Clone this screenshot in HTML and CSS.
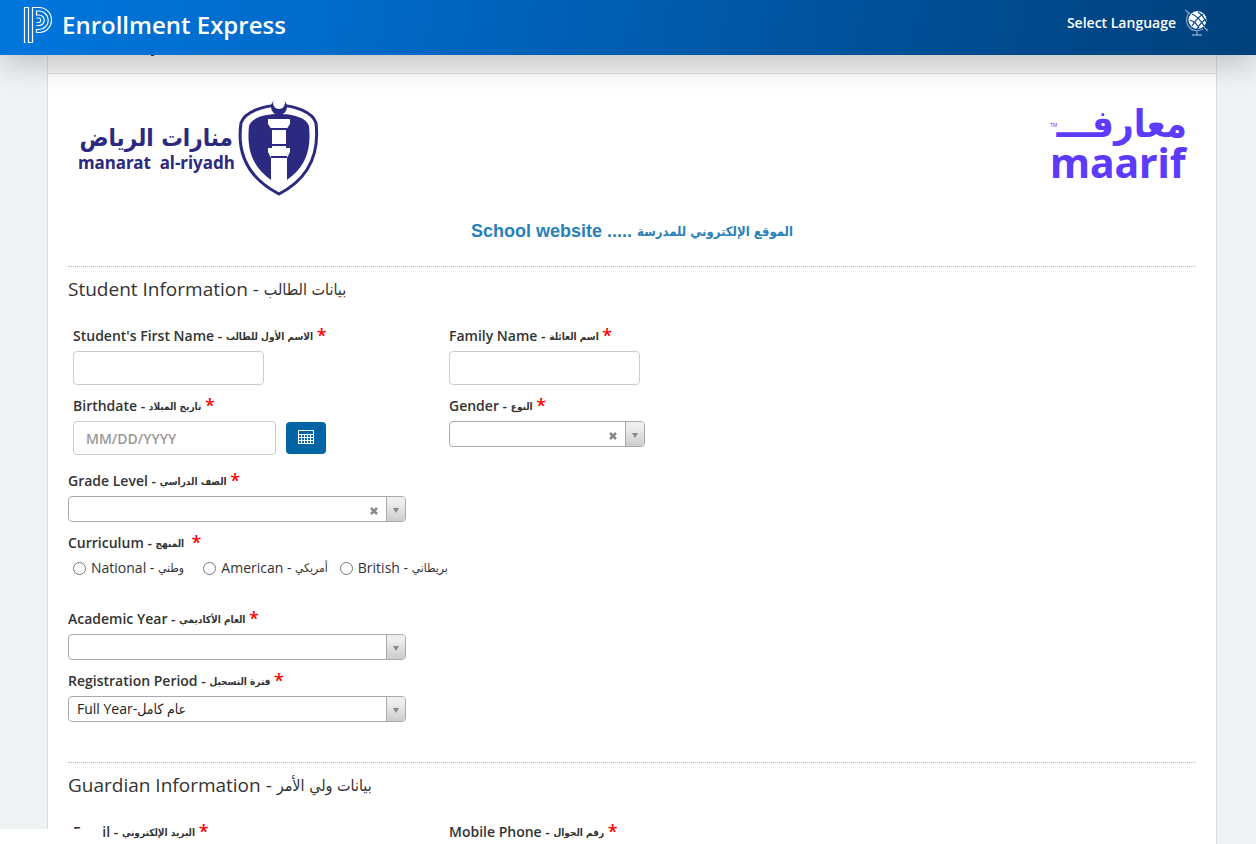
FILE: index.html
```html
<!DOCTYPE html>
<html lang="en">
<head>
    <meta charset="UTF-8">
    <title>Enrollment Express</title>
    <link rel="stylesheet" href="styles.css">
</head>
<body>
    <header class="navbar">
        <svg class="brand-icon" width="30" height="38" viewBox="0 0 30 38" fill="none" stroke="#fff" stroke-width="1.2">
            <path d="M2.500 36.500H1.500V1.500H5.500V29"/>
            <path d="M9.500 36.500H5.500V29M9.500 36.500V1.500H16a12.200 12.200 0 0 1 0 25H13.500V23.500H16a9.200 9.200 0 0 0 0-18.500H13.500V9H16a5.200 5.200 0 0 1 0 10.500H13.500"/>
            <path d="M13.500 12H16a2.300 2.300 0 0 1 0 4.500H13.500"/>
        </svg>
        <span class="brand">Enrollment Express</span>
        <a class="language" href="#">Select Language
            <svg width="24" height="28" viewBox="0 0 24 28" fill="none">
                <circle cx="12.500" cy="11" r="9" fill="#fff"/>
                <path d="M7 5Q14 8 19 17M13 3Q18 6 21 13M5 11Q11 13 14 19M18 5Q11 10 7 17M21 10Q16 13 12 20" stroke="#00498b" stroke-width="1.200"/>
                <path d="M0 1L5 5M4 3Q-1 12 4 18T18 20M19 18L23 22M12 22V26M7 26H17" stroke="#7fa3c5" stroke-width="1.300"/>
            </svg>
        </a>
    </header>

    <main class="panel">
        <div class="panel-heading"></div>
        <form class="panel-body">
            <div class="logos">
                <svg width="252" height="100" viewBox="0 0 252 100">
                    <text class="logo-ar" x="165" y="48" text-anchor="end" direction="ltr" fill="#2b2a80">منارات الرياض</text>
                    <text class="logo-en" x="10" y="71" fill="#2b2a80">manarat&#160; al-riyadh</text>
                    <path d="M211 7C196 8 177 13 173 25C168 60 184 82 211 96C238 82 252 60 248 25C244 13 226 8 211 7Z" fill="#fff" stroke="#2b2a80" stroke-width="3"/>
                    <path d="M211 16C198 16 184 19 181 28C178 57 188 71 203 82V60L200 54V50H204V32L200 26V21H222V26L218 32V50H222V54L219 60V82C234 71 244 57 241 28C238 19 224 16 211 16Z" fill="#2b2a80"/>
                    <path d="M203 31H219M204 47H218M203 59H219" stroke="#2b2a80" stroke-width="2"/>
                    <circle cx="211" cy="9" r="8" fill="#2b2a80"/>
                    <circle cx="211" cy="5" r="6" fill="#fff"/>
                </svg>
                <svg width="140" height="90" viewBox="0 0 140 90">
                    <text class="maarif-ar" x="138" y="39" text-anchor="end" direction="ltr" fill="#5d3bfc">معارفـــ</text>
                    <text class="maarif-en" x="1" y="80" fill="#5d3bfc">maarif</text>
                    <text class="maarif-tm" x="1" y="29" fill="#5d3bfc">TM</text>
                </svg>
            </div>

            <p class="website"><a href="#">School website ..... <span class="ar" lang="ar">الموقع الإلكتروني للمدرسة</span></a></p>

            <section class="section">
                <h2>Student Information - <span class="ar" lang="ar">بيانات الطالب</span></h2>
                <div class="row">
                    <div class="field">
                        <label for="firstName">Student's First Name - <span class="ar" lang="ar">الاسم الأول للطالب</span> <span class="req">*</span></label>
                        <input class="text" type="text" id="firstName">
                    </div>
                    <div class="field">
                        <label for="familyName">Family Name - <span class="ar" lang="ar">اسم العائلة</span> <span class="req">*</span></label>
                        <input class="text" type="text" id="familyName">
                    </div>
                    <div class="field">
                        <label for="birthdate">Birthdate - <span class="ar" lang="ar">تاريخ الميلاد</span> <span class="req">*</span></label>
                        <div class="date">
                            <input class="text date-text" type="text" id="birthdate" placeholder="MM/DD/YYYY">
                            <button class="calendar" type="button" aria-label="Open calendar">
                                <svg width="16" height="14" viewBox="0 0 16 14" fill="none" stroke="#fff" shape-rendering="crispEdges">
                                    <path d="M0 .5H16M0 4.500H16M0 7.500H16M0 10.500H16M0 13.500H16M.5 0V14M3.500 4V14M6.500 4V14M9.500 4V14M12.500 4V14M15.500 0V14"/>
                                </svg>
                            </button>
                        </div>
                    </div>
                    <div class="field">
                        <label for="gender">Gender - <span class="ar" lang="ar">النوع</span> <span class="req">*</span></label>
                        <div class="select short">
                            <select id="gender"><option></option></select>
                            <button class="clear" type="button" aria-label="Clear gender"><svg width="8" height="8" viewBox="0 0 8 8"><path d="M1 1L7 7M7 1L1 7" stroke="#888" stroke-width="2.500"/></svg></button>
                        </div>
                    </div>
                </div>

                <div class="group">
                    <label for="grade">Grade Level - <span class="ar" lang="ar">الصف الدراسي</span> <span class="req">*</span></label>
                    <div class="select">
                        <select id="grade"><option></option></select>
                        <button class="clear" type="button" aria-label="Clear grade"><svg width="8" height="8" viewBox="0 0 8 8"><path d="M1 1L7 7M7 1L1 7" stroke="#888" stroke-width="2.500"/></svg></button>
                    </div>
                </div>

                <fieldset class="group curriculum">
                    <legend>Curriculum - <span class="ar" lang="ar">المنهج</span>&nbsp; <span class="req">*</span></legend>
                    <div class="radios">
                        <label><input type="radio" name="curriculum"><span>National - <span class="ar" lang="ar">وطني</span>&nbsp;&nbsp;</span></label>
                        <label><input type="radio" name="curriculum"><span>American - <span class="ar" lang="ar">أمريكي</span></span></label>
                        <label><input type="radio" name="curriculum"><span>British - <span class="ar" lang="ar">بريطاني</span></span></label>
                    </div>
                </fieldset>

                <div class="group">
                    <label for="year">Academic Year - <span class="ar" lang="ar">العام الأكاديمي</span> <span class="req">*</span></label>
                    <div class="select">
                        <select id="year"><option></option></select>
                    </div>
                </div>

                <div class="group">
                    <label for="period">Registration Period - <span class="ar" lang="ar">فترة التسجيل</span> <span class="req">*</span></label>
                    <div class="select">
                        <select id="period"><option>Full Year-عام كامل</option></select>
                    </div>
                </div>
            </section>

            <section class="section">
                <h2>Guardian Information - <span class="ar" lang="ar">بيانات ولي الأمر</span></h2>
                <div class="row">
                    <div class="field">
                        <label for="email">Email - <span class="ar" lang="ar">البريد الإلكتروني</span> <span class="req">*</span></label>
                        <input class="text" type="email" id="email">
                    </div>
                    <div class="field">
                        <label for="mobile">Mobile Phone - <span class="ar" lang="ar">رقم الجوال</span> <span class="req">*</span></label>
                        <input class="text" type="tel" id="mobile">
                    </div>
                </div>
            </section>
        </form>
    </main>
    <div class="status-bar"></div>
</body>
</html>
```
FILE: styles.css
```css
* {
    box-sizing: border-box;
}

html, body {
    height: 100%;
    overflow: hidden;
}

body {
    margin: 0;
    background: #eff3f4;
    color: #333;
    font: 14px/20px "Open Sans", "DejaVu Sans", sans-serif;
}

.navbar {
    position: relative;
    z-index: 2;
    display: flex;
    align-items: center;
    height: 55px;
    padding: 0 47px 6px 23px;
    background: linear-gradient(100deg, #0076dc, #006ac8 28%, #004a8e 80%, #00417c);
    box-shadow: 0 10px 30px rgba(0, 0, 0, 0.2);
    color: #fff;
}

.brand-icon {
    margin-right: 9px;
}

.brand {
    font-size: 24px;
    font-weight: 600;
    line-height: 32px;
}

.language {
    display: flex;
    align-items: center;
    gap: 9px;
    margin-left: auto;
    padding-bottom: 4px;
    color: #fff;
    font-weight: 600;
    text-decoration: none;
}

.panel {
    margin: 0 39px 0 47px;
    border: 1px solid #d9dcde;
    border-top: 0;
    background: #fff;
}

.panel-heading {
    height: 19px;
    border-bottom: 1px solid #ddd;
    background: #f5f5f5;
}

.panel-heading::before {
    content: "";
    display: block;
    width: 3px;
    height: 1px;
    margin-left: 103px;
    background: #333;
}

.panel-body {
    padding: 24px 20px 0;
}

.logos {
    display: flex;
    justify-content: space-between;
    padding-right: 7px;
}

.logo-ar {
    font: bold 24px "DejaVu Sans Condensed", "DejaVu Sans", sans-serif;
}

.logo-en {
    font: bold 17px "Noto Sans", sans-serif;
}

.maarif-ar {
    font: bold 38px "DejaVu Sans Condensed", "DejaVu Sans", sans-serif;
}

.maarif-en {
    font: bold 41px "Noto Sans", sans-serif;
}

.maarif-tm {
    font: 5px "Noto Sans", sans-serif;
}

.website {
    margin: 23px 0 25px;
    font: bold 18px/20px "Liberation Sans", "DejaVu Sans", sans-serif;
    text-align: center;
}

.ar {
    font-family: "DejaVu Sans Condensed", "DejaVu Sans", sans-serif;
    font-size: 10px;
    line-height: 1;
    vertical-align: 1px;
}

.website a {
    color: #2980b9;
    text-decoration: none;
}

.website .ar {
    font-size: 13px;
}

.section {
    border-top: 1px dotted #bbb;
    padding-bottom: 40px;
}

h2 {
    margin: 10px 0 25px;
    font-size: 19px;
    font-weight: 400;
    line-height: 24px;
}

h2 .ar {
    font-size: 16px;
}

.row {
    display: grid;
    grid-template-columns: repeat(3, 1fr);
    row-gap: 11px;
}

.field {
    padding-left: 5px;
}

.field:nth-child(even) {
    grid-column: 2 / 4;
}

label, legend {
    display: block;
    height: 20px;
    margin-bottom: 5px;
    padding: 0;
    font-weight: 600;
    white-space: nowrap;
}

.req {
    color: #f00;
    font-size: 18px;
    font-weight: 600;
    line-height: 1;
    vertical-align: -1px;
}

.text {
    display: block;
    width: 191px;
    height: 34px;
    padding: 6px 12px;
    border: 1px solid #ccc;
    border-radius: 4px;
    background: #fff;
    font: 600 14px/20px "Open Sans", sans-serif;
}

.text::placeholder {
    color: #999;
}

.date {
    display: flex;
    align-items: center;
    gap: 10px;
}

.date-text {
    width: 203px;
}

.calendar {
    display: flex;
    align-items: center;
    justify-content: center;
    width: 40px;
    height: 32px;
    padding: 0 0 2px;
    border: 0;
    border-radius: 4px;
    background: #0064a5;
}

.group {
    margin: 11px 0 0;
    padding: 0;
    border: 0;
}

.row + .group {
    margin-top: 16px;
}

.select {
    position: relative;
    width: 338px;
}

.select.short {
    width: 196px;
}

.select select {
    display: block;
    appearance: none;
    width: 100%;
    height: 26px;
    padding: 0 28px 0 8px;
    border: 1px solid #aaa;
    border-radius: 4px;
    background: #fff;
    color: #222;
    font: 14px/24px "Open Sans", "DejaVu Sans Condensed", "DejaVu Sans", sans-serif;
}

/* arrow cell */
.select::before {
    content: "";
    position: absolute;
    top: 1px;
    right: 1px;
    bottom: 1px;
    width: 18px;
    border-left: 1px solid #aaa;
    border-radius: 0 3px 3px 0;
    background: linear-gradient(#eee 20%, #ccc);
    pointer-events: none;
}

.select::after {
    content: "";
    position: absolute;
    top: 12px;
    right: 7px;
    border: 3px solid transparent;
    border-top: 5px solid #888;
    border-bottom: 0;
    pointer-events: none;
}

.clear {
    position: absolute;
    top: 11px;
    right: 28px;
    display: flex;
    padding: 0;
    border: 0;
    background: none;
}

.radios {
    display: flex;
    gap: 12px;
    padding-left: 5px;
}

.radios label {
    display: flex;
    align-items: center;
    gap: 5px;
    margin: 0;
    font-weight: 400;
}

.radios .ar {
    font-size: 12px;
}

.radios input {
    width: 13px;
    height: 13px;
    margin: 0;
}

.curriculum {
    padding-bottom: 20px;
}

/* strip left by the browser status bubble */
.status-bar {
    position: fixed;
    bottom: 0;
    left: 0;
    z-index: 3;
    width: 103px;
    height: 15px;
    background: #fff;
}
```
